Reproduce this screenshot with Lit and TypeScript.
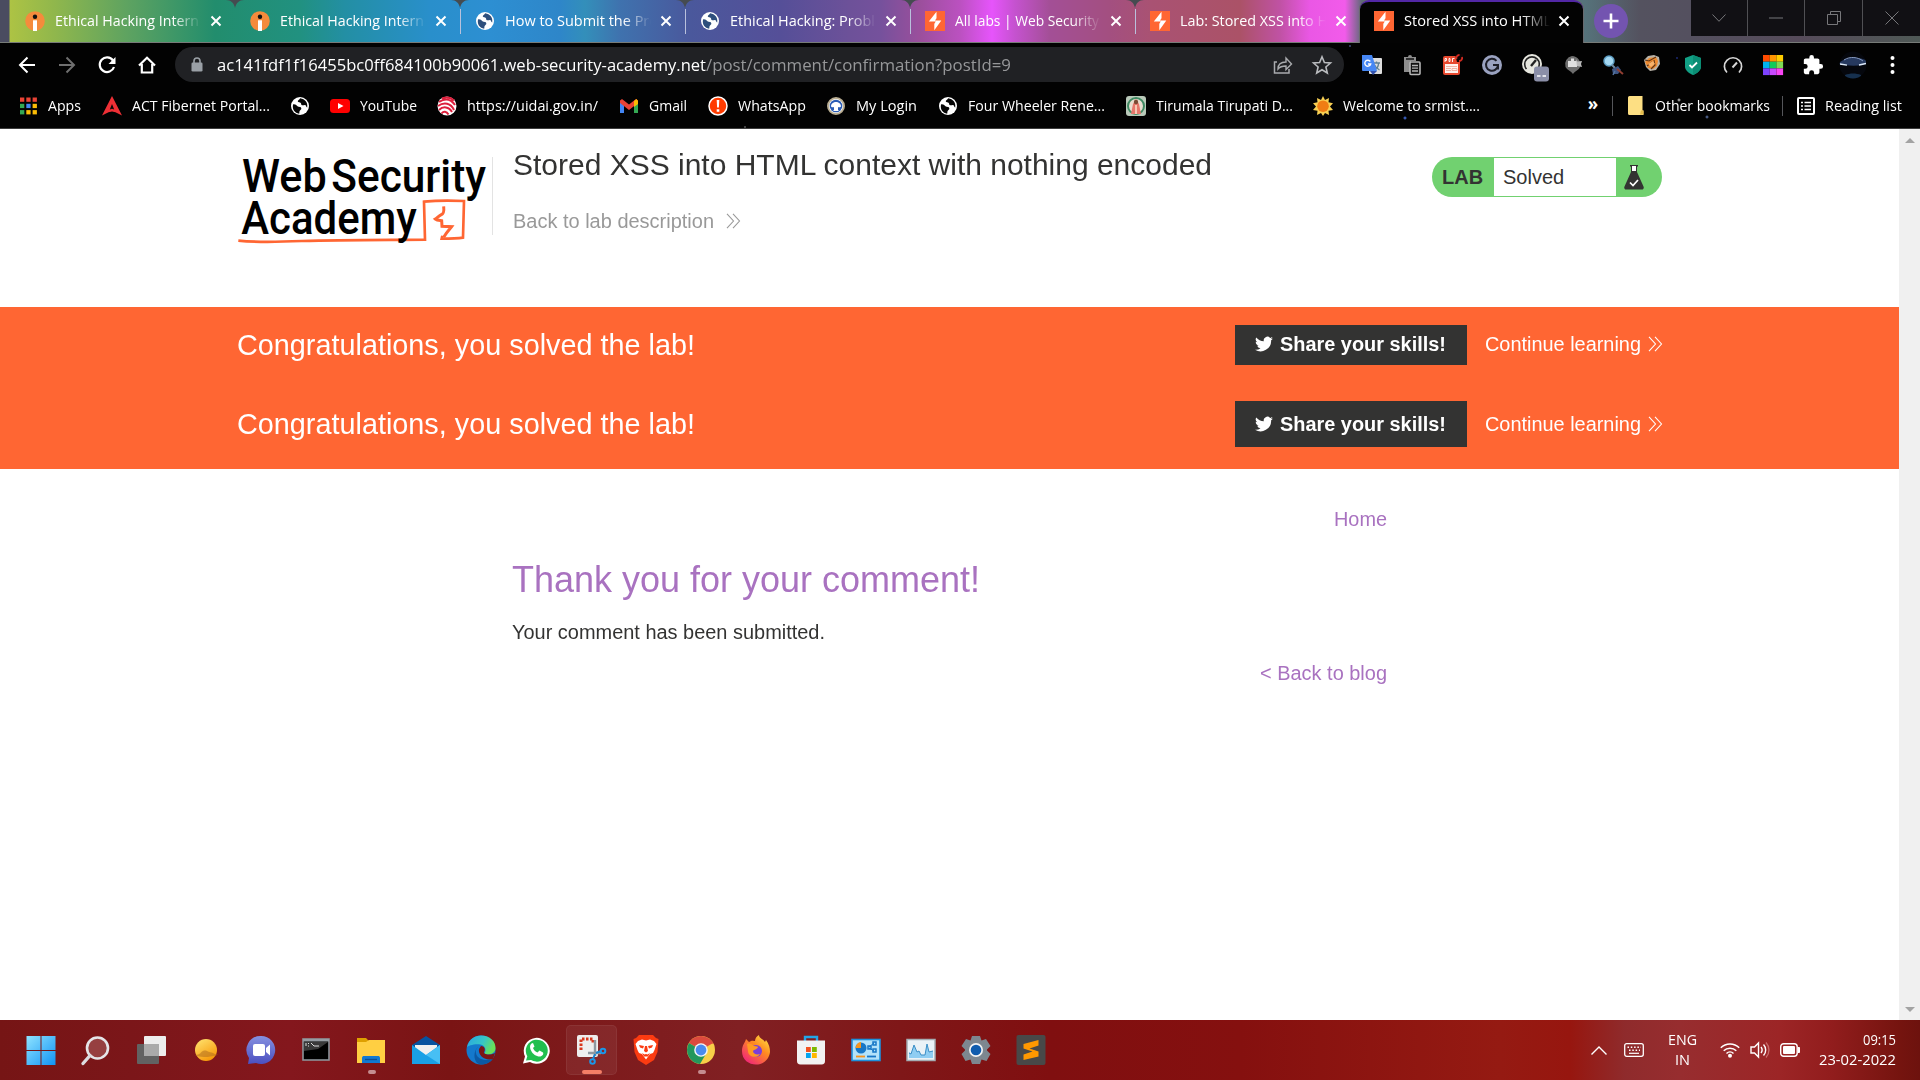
import { LitElement, html, css, svg, TemplateResult } from "lit";
import { customElement, property } from "lit/decorators.js";

/* One line of text, condensed or widened to an exact advance width. */
@customElement("fit-text")
class FitText extends LitElement {
  @property({ type: Number }) w = 0;
  @property() text = "";
  static styles = css`
    :host { display: block; flex: none; white-space: pre; }
    .t { display: inline-block; transform-origin: 0 50%; }
  `;
  render() {
    return html`<span class="t">${this.text}</span>`;
  }
  updated() {
    const el = this.renderRoot.querySelector(".t") as HTMLElement;
    const natural = el.getBoundingClientRect().width;
    if (this.w && natural) {
      this.style.width = this.w + "px";
      el.style.transform = `scaleX(${this.w / natural})`;
    }
  }
}

const box = (w: number, h: number, vb: string, body: unknown) =>
  html`<svg width=${w} height=${h} viewBox=${vb} fill="none">${body}</svg>`;
const ft = (text: string, w: number) => html`<fit-text .text=${text} .w=${w}></fit-text>`;

const close = box(12, 12, "0 0 12 12", svg`<path d="M1.5 1.5l9 9M10.5 1.5l-9 9" stroke="#fff" stroke-width="2"/>`);
const internIcon = box(20, 20, "0 0 20 20", svg`<circle cx="10" cy="10" r="9.8" fill="#f58b3c"/><circle cx="10" cy="5.800" r="2.200" fill="#111"/><path d="M8 9.300h4V20H8z" fill="#fff"/>`);
const globeWith = (ink: string) => box(20, 20, "0 0 20 20", svg`<circle cx="10" cy="10" r="9" fill="#fff"/><path d="M3 8.500c2-.5 3.200.5 4.500 1.800 1 1 3.500.2 3.800 2 .3 1.500-1.300 1.700-1.800 3l-.3 2.400C4.800 17 2 13.500 3 8.500zM10.200 2.200C9.500 4 7.500 4 7.800 5.500c.4 1.300 2.200.3 3 1.500.7 1.200 0 2 1.500 2.300 1.400.2 2.200-.8 3.200-.1.900.7.5 2 1.700 2.200C18 6.500 15 3 10.200 2.200z" fill=${ink}/>`);
const globe = globeWith("#2e4f7c");
const globeDark = globeWith("#050505");
const burp = box(20, 20, "0 0 20 20", svg`<path fill="#ff6633" d="M0 0h20v20H0z"/><path d="M11.500 .800v6.400l-1.500 2.300h6.300L9.300 19.200v-6.400l1.500-2.300H3.800z" fill="#fff"/>`);

const tabs: [string, number, TemplateResult][] = [
  ["Ethical Hacking Intern", 144, internIcon],
  ["Ethical Hacking Intern", 144, internIcon],
  ["How to Submit the Pro", 153, globe],
  ["Ethical Hacking: Proble", 153, globe],
  ["All labs | Web Security", 144, burp],
  ["Lab: Stored XSS into H", 148, burp],
  ["Stored XSS into HTML c", 158, burp],
];

const colors9 = ["#ea4335", "#ea4335", "#ea4335", "#34a853", "#4285f4", "#fbbc05", "#34a853", "#fbbc05", "#fbbc05"];
const marks: [string, number, TemplateResult][] = [
  ["Apps", 33, box(20, 20, "0 0 20 20", svg`${colors9.map((c, i) => svg`<rect x=${2 + (i % 3) * 6.300} y=${1.500 + Math.floor(i / 3) * 6.300} width="4.300" height="4.300" fill=${c}/>`)}`)],
  ["ACT Fibernet Portal...", 138, box(20, 20, "0 0 20 20", svg`<path d="M10 0l10 19.500-6.500-3.200-3.500-.8-3.500.8L0 19.500z" fill="#ee2f35"/><path d="M10 8l2.200 5.500-2.200-.8-2.200.8z" fill="#090909"/>`)],
  ["", 0, globeDark],
  ["YouTube", 57, box(20, 20, "0 0 20 20", svg`<rect y="3" width="20" height="14" rx="3.500" fill="#f00"/><path d="M8 7l5.500 3L8 13z" fill="#fff"/>`)],
  ["https://uidai.gov.in/", 131, box(20, 20, "0 0 20 20", svg`<circle cx="10" cy="10" r="9.500" fill="#fff"/><path d="M2 6c6-4 12-3 16 3M1 10c6-4.500 13-3 16 4M2 14c4-4 10-3.500 13 2M4.500 17.500c2-2.500 5-2.500 7 1M5 2.500c5-2 9-1 12 2" stroke="#dc1f3c" stroke-width="2"/>`)],
  ["Gmail", 38, box(20, 20, "0 0 20 20", svg`<path d="M1 5v12h4V8z" fill="#4285f4"/><path d="M15 8v9h4V5z" fill="#34a853"/><path d="M1 4.500L3 3l7 5.500L17 3l2 1.500V7l-9 7-9-7z" fill="#ea4335"/><path d="M15 5l2.500-2L19 5v3l-4 3z" fill="#fbbc04"/>`)],
  ["WhatsApp", 68, box(20, 20, "0 0 20 20", svg`<circle cx="10" cy="10" r="9" fill="#ff3b00" stroke="#fff" stroke-width="1.500"/><path d="M8.700 4h2.600l-.4 7.500H9.100zM8.700 13.200h2.600v2.600H8.700z" fill="#fff"/>`)],
  ["My Login", 61, box(20, 20, "0 0 20 20", svg`<circle cx="10" cy="10" r="8" fill="#fff" stroke="#b9ad92" stroke-width="2"/><circle cx="10" cy="10" r="6.300" fill="#2a5bb5"/><path d="M5 10.500c0-3 2.500-4.500 5-4.500s5 1.500 5 4.500c-1 1-2.500 1-3 .5V14l1 1H7l1-1v-3c-1 .5-2 .5-3-.5z" fill="#fff"/>`)],
  ["Four Wheeler Rene...", 137, globeDark],
  ["Tirumala Tirupati D...", 137, box(20, 20, "0 0 20 20", svg`<rect width="20" height="20" rx="3" fill="#b9c9b9"/><circle cx="10" cy="10" r="8" stroke="#3f8a63" stroke-width="2" fill="#e9ddd0"/><path d="M10 3l3 5 2 10H5L7 8z" fill="#e6776c"/><circle cx="10" cy="6" r="2.200" fill="#7b4a35"/><path d="M10 9v9" stroke="#f5c8b4" stroke-width="2"/>`)],
  ["Welcome to srmist....", 137, box(20, 20, "0 0 20 20", svg`<path d="M10 0l2 4 4-2-.5 4.200 4.500 1-3 3.300 3 3.500-4.500.7.500 4.300-4-2-2 3-2-3-4 2 .5-4.300L0 14l3-3.500L0 7.200l4.500-1L4 2l4 2z" fill="#f7cf53"/><circle cx="10" cy="10.200" r="5.800" fill="#f07d14"/>`)],
];

const exts: TemplateResult[] = [
  box(22, 22, "0 0 22 22", svg`<rect x="8" y="4" width="13" height="16" rx="1" fill="#dedede"/><path d="M12 9h7M15.500 7.500V9M13 16c3-1 4.500-4 4.500-7M13.500 11c1 2 3 4 5 5" stroke="#5d7f94" stroke-width="1.300"/><path d="M1 1h10l5 16H2a1 1 0 01-1-1z" fill="#4687f4"/><path d="M9 17h7l-4 4z" fill="#3352ad"/><path d="M9.300 7.500A3 3 0 109.700 10H7" stroke="#fff" stroke-width="1.400"/>`),
  box(22, 22, "0 0 22 22", svg`<path d="M3 3h4a2 2 0 014 0h4v4h-5v11H3z" fill="#8d8d8d"/><path d="M5 5h8" stroke="#111" stroke-width="1.500"/><rect x="9" y="8" width="10" height="12.500" rx="1" fill="#111" stroke="#b5b5b5" stroke-width="1.600"/><path d="M11 11.500h6M11 14.200h6M11 17h6" stroke="#b5b5b5" stroke-width="1.300"/>`),
  box(22, 22, "0 0 22 22", svg`<rect x="2" y="2" width="17" height="19" rx="2" fill="#e8492f"/><rect x="4" y="10" width="13" height="9" fill="#fff3ef"/><path d="M5 12.500h11M5 14.500h5M5 16.500h5M11 14.500h5v2h-5z" stroke="#f0a292" stroke-width=".8"/><path d="M4 8V4.500h1.500v2H4M8 4.500v3h1v-3zM11.500 8V4.500h2" stroke="#fff" stroke-width=".9"/><path d="M14 0h8v8h-6z" fill="#0a0505"/><path d="M15.500 5a3 3 0 013-4M21 3a3 3 0 01-3 4" stroke="#d52b21" stroke-width="1.800"/>`),
  box(22, 22, "0 0 22 22", svg`<circle cx="11" cy="11" r="10" fill="#9aa2c0"/><path d="M15.500 6.800A6 6 0 1017 11h-5M17 11v4.500" stroke="#1c1d26" stroke-width="2"/>`),
  html`<svg width="22" height="22" viewBox="0 0 22 22" fill="none"><circle cx="11" cy="10" r="10" fill="#e7e7df"/><path d="M5.500 15a7.300 7.300 0 1111 0" stroke="#222" stroke-width="1.600"/><path d="M10 12l5-6" stroke="#222" stroke-width="2.400"/><rect x="13" y="12.500" width="15" height="15" rx="3" fill="#8b8fa8"/><path d="M16 22h3.500M21.500 22H25" stroke="#fff" stroke-width="1.500"/></svg>`,
  box(22, 22, "0 0 22 22", svg`<path d="M10 2a8.500 8.500 0 018 11c-1 3-5 4-7 7-2-3-6-4-7.500-7A8.500 8.500 0 0110 2z" fill="#6d6d6d"/><path d="M6 7h3V4.500h3V7h3v6H6z" fill="#e0e0e0"/><path d="M14 5l1.500 2.500L20 7l-1 3 1 3-5-1z" fill="#b9b9b9"/>`),
  box(22, 22, "0 0 22 22", svg`<circle cx="7" cy="7" r="5" fill="#a4d8f2" stroke="#5e9ec3" stroke-width="1.500"/><path d="M10 11l3 3" stroke="#6d89a2" stroke-width="2"/><path d="M10 15l6-3 3 4-3 4-5 0z" fill="#3d5482"/><path d="M15 15l6 5" stroke="#913e31" stroke-width="2"/><path d="M13 17l-2 4" stroke="#54739d" stroke-width="1.500"/>`),
  box(22, 22, "0 0 22 22", svg`<path d="M2 6l4-4 6-1 5 2 1 7-4 6-6 1-4-4z" fill="#b9b3a8"/><path d="M3 8l4-4 7-1 2 4-1 5-4 3-5-1z" fill="#ee8a2f"/><path d="M3 6l4 1 7-4M5 12l5-4 3 4M9 15l4-4-1-5" stroke="#5b3417" stroke-width="1.100"/><path d="M6 10l5-3 2 3-4 3z" fill="#f6b26b"/>`),
  box(22, 22, "0 0 22 22", svg`<path d="M11 1l8 3v9c0 3.500-5 7-8 8-3-1-8-4.500-8-8V4z" fill="#12a085"/><path d="M11 1l8 3v9c0 3.500-5 7-8 8z" fill="#0b8d74"/><path d="M7.500 11l2.500 2.500 5-5" stroke="#fff" stroke-width="1.800"/>`),
  box(22, 22, "0 0 22 22", svg`<path d="M5 18.500a8.600 8.600 0 1112 0" stroke="#d6d6d6" stroke-width="1.700"/><path d="M10.500 13.500l4.500-5" stroke="#d6d6d6" stroke-width="2"/>`),
  box(22, 22, "0 0 22 22", svg`${["#ff4b00", "#ff9500", "#ffcc00", "#00b3ef", "#12cc5a", "#7edb54", "#7d42ff", "#c84aff", "#fa45f4"].map((c, i) => svg`<rect x=${1 + (i % 3) * 6.700} y=${1 + Math.floor(i / 3) * 6.700} width="6.700" height="6.700" fill=${c}/>`)}`),
  box(22, 22, "0 0 24 24", svg`<path fill="#fff" d="M20.500 11H19V7c0-1.100-.9-2-2-2h-4V3.500a2.500 2.500 0 00-5 0V5H4c-1.100 0-2 .9-2 2v3.800h1.500a2.700 2.700 0 010 5.400H2V20c0 1.100.9 2 2 2h3.800v-1.500a2.700 2.700 0 015.400 0V22H17c1.100 0 2-.9 2-2v-4h1.500a2.500 2.500 0 000-5z"/>`),
  box(28, 28, "0 0 28 28", svg`<defs><clipPath id="av"><circle cx="14" cy="14" r="13.500"/></clipPath></defs><g clip-path="url(#av)"><path fill="#05070d" d="M0 0h28v28H0z"/><path d="M0 12c6-6 20-7 28-2l-3 4c-8 1-18 1-25-1z" fill="#26395f"/><path d="M5 9c6-4 14-3 19 1" stroke="#8598bf" stroke-width="1"/><path d="M1 13l7 1.200M20 14l7-1.500" stroke="#dce8f7" stroke-width="1.300"/><path d="M6 24c5-2 11-2 16 0v4H6z" fill="#16304e"/></g>`),
  box(22, 22, "0 0 22 22", svg`<circle cx="10.500" cy="4" r="2" fill="#fff"/><circle cx="10.500" cy="11" r="2" fill="#fff"/><circle cx="10.500" cy="18" r="2" fill="#fff"/>`),
];

const chev = (c: string) => box(15, 16, "0 0 15 16", svg`<path d="M1 .8l6.500 7.200L1 15.200M7 .8L13.500 8 7 15.200" stroke=${c} stroke-width="1.100"/>`);
const bird = box(18, 18, "0 0 24 24", svg`<path fill="#fff" d="M23.950 4.600a10 10 0 01-2.800.8 4.900 4.900 0 002.100-2.700c-1 .6-2 1-3.100 1.200a4.900 4.900 0 00-8.400 4.500A14 14 0 011.700 3.200a4.900 4.900 0 001.500 6.500 4.900 4.900 0 01-2.200-.6 4.900 4.900 0 003.900 4.900 5 5 0 01-2.200.1 4.900 4.900 0 004.600 3.400A9.900 9.900 0 010 19.500a14 14 0 0021.500-12.400 10 10 0 002.450-2.500z"/>`);

const dk = (body: unknown) => box(32, 32, "0 0 32 32", body);
const dock: TemplateResult[] = [
  dk(svg`<defs><linearGradient id="wn" x1="0" y1="0" x2="1" y2="1"><stop stop-color="#8fe3ff"/><stop offset="1" stop-color="#1093f5"/></linearGradient></defs><path d="M1.500 2h14v14h-14zM16.500 2h14v14h-14zM1.500 17h14v14h-14zM16.500 17h14v14h-14z" fill="url(#wn)"/>`),
  dk(svg`<circle cx="17.500" cy="14" r="10.500" fill="#963f40" stroke="#e5e5e8" stroke-width="2.600"/><path d="M10 21.500l-7 8" stroke="#dcdce0" stroke-width="3.400" stroke-linecap="round"/>`),
  dk(svg`<rect x="9" y="2" width="22" height="20" rx="1" fill="#ededed"/><rect x="2" y="10" width="22" height="20" rx="1" fill="#626262"/><path d="M9 10h15v12H9z" fill="#aaa"/>`),
  dk(svg`<defs><linearGradient id="wt" x1="0" y1="0" x2=".6" y2="1"><stop stop-color="#ffe573"/><stop offset="1" stop-color="#f79a0a"/></linearGradient></defs><circle cx="16" cy="16" r="11" fill="url(#wt)"/><path d="M5 21c3 0 5-1 6-2.500 2-2 4-2.500 6-1.500 2 1.500 4 1 6 2s3 1.500 5 1.500c-2 1.500-4 1-6 1.800-3 .7-5 1-8 .7-4 0-6-1-9-2z" fill="#b8731f" opacity=".6"/>`),
  dk(svg`<defs><linearGradient id="ch" x1="0" y1="0" x2="0" y2="1"><stop stop-color="#8590e0"/><stop offset="1" stop-color="#4b4fc0"/></linearGradient></defs><path d="M16 2a14 14 0 11-5 27l-8 1 1-6A14 14 0 0116 2z" fill="url(#ch)"/><rect x="8" y="10" width="12" height="12" rx="2" fill="#fff"/><path d="M21 14l4-3.500v11L21 18z" fill="#fff"/>`),
  dk(svg`<rect x="3" y="5" width="26" height="21" fill="#000" stroke="#8d949a" stroke-width="1.600"/><path d="M3 5h26v2.500H3z" fill="#969ca2"/><path d="M4 8h24l-10 7-14 2z" fill="#393939"/><path d="M6 9v3M8.500 9v1M8.500 11.500v1M11 9l3 3h5" stroke="#ddd"/>`),
  dk(svg`<path d="M2 4h9l3 3h16v8H2z" fill="#dea000"/><path d="M2 8h9l3-2h16v23H2z" fill="#ffcf42"/><path d="M7 29v-5c0-1.500 1-2 2-2h14c1 0 2 .5 2 2v5z" fill="#1179d1"/><path d="M10 25.500h12" stroke="#0a4e94" stroke-width="1.300"/>`),
  dk(svg`<path d="M2 11L16 2l14 9v5H2z" fill="#0753a0"/><path d="M5 11h22v12H5z" fill="#f0f0f0"/><path d="M2 11l14 10L30 11v19H2z" fill="#19a0e6"/><path d="M30 11v19L16 21z" fill="#47bff4"/>`),
  dk(svg`<defs><linearGradient id="eg" x1="0" y1="0" x2="1" y2=".4"><stop stop-color="#2aa5e4"/><stop offset=".6" stop-color="#36c6c6"/><stop offset="1" stop-color="#68e05a"/></linearGradient></defs><circle cx="16" cy="16" r="14.500" fill="#1479cc"/><path d="M2 13C4 5 10 1.500 16 1.500c9 0 15 6 14.500 13-.5 6-8 7-11 5 2-3 1-8-4-9C9 9.500 3 12 2 13z" fill="url(#eg)"/><path d="M13 13c-4 3-3 13 9 13 3 0 5-1 6.500-2-3 5-8 6.500-13 6.500C8 29 8 17 13 13z" fill="#0c59a4"/><path d="M16 12c3 0 5 3 3 6-1 2 5 4 11 1l-2 6c-9 2-15-4-14-10z" fill="#7c1515"/>`),
  dk(svg`<path d="M3 29.500l2-7A13 13 0 1110 28z" fill="#fff"/><path d="M6 26.500l1.300-4.300A11 11 0 1111 26z" fill="#21bf4e"/><path d="M11.500 9.500c-4 3 1 13.500 9 13 3-1 3-3 2.500-4l-3.500-2-2 2c-2-.5-4-3-4.500-4.500l1.500-1.500-1.500-3.500z" fill="#fff"/>`),
  dk(svg`<rect x="2" y="1" width="21" height="22" rx="2" fill="#eee"/><path d="M6 16V5h12v4" stroke="#d8371d" stroke-width="3" stroke-dasharray="2.500 1.500"/><path d="M20 6v16M13 19h13" stroke="#8e98a0" stroke-width="2.400"/><path d="M20 20l-2 5M21 19l5-2" stroke="#1687d4" stroke-width="2"/><circle cx="17.500" cy="27.500" r="2.300" stroke="#1c96e8" stroke-width="2"/><circle cx="28" cy="17" r="2.300" stroke="#1c96e8" stroke-width="2"/>`),
  dk(svg`<path d="M9 1h14l3 3 2.500 1-1 13-3.500 8-8 5-8-5-3.500-8-1-13L6 4z" fill="#fb3b11"/><path d="M8 7l4-1.500 4 1 4-1L24 7l2.500 3-2 6-1.500 3-3 1-4 5.500-4-5.500-3-1-1.500-3-2-6z" fill="#fff"/><path d="M9 11l5 1-1 2.500-3-1zM23 11l-5 1 1 2.500 3-1zM15 12h2l1 5-2 1.500-2-1.500zM12 19l2.500 1.500L16 20l1.500.5L20 19l-2 3.500h-4z" fill="#fb3b11"/>`),
  dk(svg`<circle cx="16" cy="16" r="14" fill="#f8cf48"/><path d="M16 16L3.900 9A14 14 0 0116 2c5 0 10 3 12.100 7z" fill="#db4a3e"/><path d="M3.900 9A14 14 0 0015 30l6.500-11-5.500-3z" fill="#23975c"/><path d="M16 9h12.100" stroke="#db4a3e"/><circle cx="16" cy="16" r="6.800" fill="#f5f5f5"/><circle cx="16" cy="16" r="5.400" fill="#4a8bee"/>`),
  dk(svg`<defs><linearGradient id="ff" x1="1" y1="0" x2=".2" y2="1"><stop stop-color="#fff04a"/><stop offset=".45" stop-color="#ff8a20"/><stop offset="1" stop-color="#f0217d"/></linearGradient></defs><path d="M2 17C2 11 5 9 6 5l3 3c3-2 5-1 6-1 0-3 2-5 4-6 0 3 4 4 6 7l1-2c3 4 4 8 4 12-1 8-7 12.500-14 12.500S2 26 2 17z" fill="url(#ff)"/><circle cx="16" cy="17" r="6" fill="#7c3fd8"/><path d="M7 10c3-1 5 0 7 2 3 0 4 1 4 1-1 3-4 2-5 4 0 3 4 4 7 3-3 5-12 3-12-3z" fill="#ff9a22"/>`),
  dk(svg`<path d="M10 8V3h12v5" stroke="#23a5e8" stroke-width="2.400"/><path d="M2 6.500h28V27c0 2-1 3.500-3.500 3.500h-21C3 30.500 2 29 2 27z" fill="#f2f2f2"/><path d="M11 13h4.800v5H11z" fill="#f2511f"/><path d="M17 13h4.800v5H17z" fill="#7eb900"/><path d="M11 19h4.800v5H11z" fill="#05a5ee"/><path d="M17 19h4.800v5H17z" fill="#ffb800"/>`),
  dk(svg`<rect x="2" y="5.500" width="28" height="21" fill="#b2e2fa" stroke="#1d91dc" stroke-width="1.600"/><circle cx="11" cy="14" r="5.500" fill="#1777c6"/><path d="M11 14V8a6 6 0 00-5.500 6z" fill="#f8941c"/><path d="M19 13l5-4M19 14l5 3" stroke="#1777c6"/><path d="M23 8h3v3h-3zM23 15h3v3h-3zM18 12h3v3h-3z" stroke="#1777c6" stroke-width="1.500"/><path d="M6 22.500h9" stroke="#f8941c" stroke-width="1.800"/><path d="M17 22.500h9" stroke="#1777c6" stroke-width="1.800"/>`),
  dk(svg`<rect x="2" y="5.500" width="28" height="21" fill="#eaf2f7" stroke="#a4adb3" stroke-width="1.500"/><path d="M4 24v-6l2 2 3-9 3 7 2-1 2 4h4l2-11 2 8 4-1v7z" fill="#8fcdf2"/><path d="M4 19l2 1 3-9 3 7 2-1 2 4h4l2-11 2 8 4-1" stroke="#3b8ec6"/>`),
  dk(svg`<path d="M12 2h8l1.500 4.500L26 5l4.500 7L27 15.500v1l3.500 3.500-4 7-5-1.500L20 30h-8l-1.500-4.500-5 1.500-4-7L5 16.500v-1L1.500 12 6 5l4.500 1.500z" fill="#7d8790"/><circle cx="16" cy="16" r="7" fill="#f3f3f3"/><circle cx="16" cy="16" r="5.300" fill="#0f5cae"/>`),
  dk(svg`<rect x="1.500" y="1" width="29" height="30" rx="2" fill="#484848"/><path d="M23.500 6v5.500l-9 3 9 3v5L8.500 26v-5.500l9-3-9-3V10z" fill="#ff9800"/>`),
];

@customElement("app-root")
class AppRoot extends LitElement {
  static styles = css`
    * { box-sizing: border-box; }
    :host { display: flex; flex-direction: column; width: 1920px; height: 1080px; overflow: hidden; background: #fff; font-family: "Liberation Sans", Arial, sans-serif; }
    svg { display: block; flex: none; overflow: visible; }
    .chrome { height: 129px; flex: none; color: #fff; font-family: "Open Sans", "Noto Sans", sans-serif; border-bottom: 1px solid #3d3d3d;
      background: radial-gradient(circle at 1405px 118px, #4a78ea 0, #2e4c9a 1px, transparent 2px), radial-gradient(circle at 1707px 117px, #6c87c4 0, transparent 2px), radial-gradient(circle at 1679px 100px, #ddd 0, transparent 2px), radial-gradient(circle at 745px 127px, #777 0, transparent 1.500px), radial-gradient(circle at 1677px 58px, #2638a0 0, transparent 1.500px), radial-gradient(circle at 1350px 46px, #5767a5 0, transparent 1.500px), #020202; }
    .strip { height: 43px; display: flex; padding-left: 10px; border-bottom: 1px solid #777b78;
      background: linear-gradient(90deg, #4a4c60 0, #4a4c60 9px, #adc344 10px, #93b84b 50px, #5ca261 130px, #228d6d 215px, #219180 300px, #238fa4 345px, #298fcb 430px, #2d8fd2 490px, #2e86c9 560px, #338fba 585px, #3f72ae 620px, #4a589c 690px, #554f98 780px, #6d5199 850px, #75519c 880px, #9b4f9c 920px, #bb51c0 960px, #e654fb 992px, #c552cf 1015px, #a34f96 1050px, #a34f80 1110px, #a95273 1150px, #ab5267 1240px, #c052a4 1280px, #ea57e5 1310px, #f25bea 1345px, #5d6a76 1362px, #56737b 1584px, #54525f 1640px, #54505f 1690px, #564b5a 1800px, #4f5956 1920px); }
    .tab { position: relative; width: 225px; height: 42px; flex: none; display: flex; align-items: center; padding-left: 15px; font-size: 14.500px; }
    .tab .name { flex: none; width: 147px; margin-left: 10px; overflow: hidden; -webkit-mask-image: linear-gradient(90deg, #000 118px, transparent 146px); mask-image: linear-gradient(90deg, #000 118px, transparent 146px); line-height: 24px; }
    .tab .x { margin-left: 8px; }
    .notch { position: absolute; left: -9px; top: 0; }
    .sep::before { content: ""; position: absolute; left: 0; top: 9px; width: 1px; height: 25px; background: #b9c1dc; }
    .active { background: #030303; border-top: 2px solid #5227a6; border-radius: 9px 9px 0 0; width: 223px; height: 43px; box-shadow: -1px 0 #69696d, 1px 0 #69696d; padding: 0 0 3px 14px; }
    .active .x { margin-left: 7px; }
    .plus { width: 34px; height: 34px; margin: 4px 0 0 11px; border-radius: 50%; background: #7354b0; display: grid; place-items: center; flex: none; }
    .win { margin-left: auto; display: grid; grid-template-columns: 57px 57px 58px 57px; height: 36px; background: #111014; }
    .win div { display: grid; place-items: center; border-right: 1px solid #505054; }
    .win div:last-child { border: 0; }
    .bar { height: 43px; display: flex; align-items: center; }
    .nav { width: 40px; display: grid; place-items: center; flex: none; }
    .bar .nav:first-child { margin-left: 7px; }
    .omni { width: 1169px; height: 35px; margin-left: 8px; border-radius: 18px; background: #202124; display: flex; align-items: center; padding: 0 12px 0 16px; font-size: 17px; flex: none; }
    .omni .host { margin-left: 14px; }
    .omni .path { color: #969799; }
    .omni .share { margin-left: auto; margin-right: 19px; }
    .exts { display: flex; margin-left: 8px; }
    .ext { width: 40.100px; height: 34px; display: grid; place-items: center; }
    .marks { height: 39px; display: flex; align-items: center; padding: 0 18px; font-size: 14.500px; gap: 20.700px; }
    .mark { display: flex; align-items: center; gap: 10px; flex: none; }
    .mark.bare { margin-right: -1.500px; }
    .more { margin-left: auto; font-weight: 700; font-size: 17px; line-height: 18px; padding-bottom: 3px; margin-right: -7px; }
    .rule { width: 1px; height: 20px; background: #55565a; }
    .other { margin: 0 -8px 0 -7px; }
    .read { margin-left: -7px; }
    .page { height: 891px; flex: none; display: flex; }
    .body { width: 1899px; flex: none; color: #333332; }
    .scroll { width: 21px; background: #f0f0f0; display: flex; flex-direction: column; justify-content: space-between; align-items: center; padding: 9px 0 8px; }
    .head { height: 178px; padding: 11px 237px 0 220px; display: flex; }
    .ruleV { width: 1px; height: 78px; background: #e3e3e3; margin: 17px 20px 0 -18px; }
    .title { font-size: 30px; line-height: 36px; margin-top: 7px; }
    .back { display: flex; align-items: center; gap: 12px; color: #999; font-size: 20px; line-height: 24px; margin-top: 26px; }
    .lab { margin: 17px 0 0 auto; width: 230px; height: 40px; border-radius: 20px; background: #71d170; display: flex; align-items: center; font-size: 20px; padding: 1px 0; }
    .lab b { width: 62px; padding-left: 10px; }
    .lab .state { width: 122px; height: 38px; background: #fff; line-height: 39px; padding-left: 9px; margin-right: 8px; }
    .banner { height: 162px; background: #ff6633; color: #fff; padding: 18px 236px 0 237px; }
    .row { display: flex; align-items: center; font-size: 20px; height: 40px; }
    .row .cont, .row .btn { padding-bottom: 2px; }
    .row + .row { margin-top: 36px; height: 46px; }
    .row + .row .cont, .row + .row .btn { padding-bottom: 0; }
    .row .msg { font-size: 30px; line-height: 34px; }
    .btn { margin-left: auto; width: 232px; height: 100%; background: #333332; display: flex; align-items: center; gap: 7px; padding-left: 20px; font-weight: 700; }
    .cont { margin-left: 18px; display: flex; align-items: center; gap: 7px; }
    .blog { width: 875px; margin-left: 512px; padding-top: 38px; font-size: 20px; line-height: 24px; display: flex; flex-direction: column; }
    .link { color: #a972c0; align-self: flex-end; }
    .blog h1 { margin: 26px 0 0; font-weight: 400; font-size: 37.500px; line-height: 44px; color: #a972c0; }
    .blog .p { margin: 19px 0 17px; }
    .task { height: 60px; flex: none; display: flex; align-items: center; padding-left: 13.500px; color: #fff; font-family: "Open Sans", "Noto Sans", sans-serif; font-size: 14.500px; line-height: 20px;
      background: linear-gradient(90deg, #761515 0, #7b1619 130px, #84171d 290px, #7a1414 450px, #7d1a1b 580px, #812023 740px, #7f1718 900px, #800f10 1050px, #85100f 1240px, #951a12 1500px, #97160f 1570px, #8f2b2c 1625px, #972d2f 1680px, #9c2526 1780px, #921d1d 1830px, #75140f 1900px, #6d120e 1920px); }
    .app { position: relative; width: 55px; height: 60px; display: grid; place-items: center; flex: none; }
    .app.on::before { content: ""; position: absolute; inset: 5px 2px; border-radius: 5px; background: rgba(255, 255, 255, 0.06); border: 1px solid rgba(255, 255, 255, 0.06); }
    .app svg { position: relative; }
    .run::after { content: ""; position: absolute; left: 24px; bottom: 6px; width: 8px; height: 4px; border-radius: 2px; background: #c58d90; }
    .on::after { content: ""; position: absolute; left: 18px; bottom: 6px; width: 20px; height: 4px; border-radius: 2px; background: #f47e66; }
    .tray { margin-left: auto; display: flex; align-items: center; padding-right: 24px; }
    .lang, .clock { display: flex; flex-direction: column; align-items: center; }
    .lang { margin: 0 23px 0 24px; }
    .clock { align-items: flex-end; margin-left: 19px; }
  `;

  render() {
    const row = html`<div class="row">
      <span class="msg">${ft("Congratulations, you solved the lab!", 458)}</span>
      <div class="btn">${bird}${ft("Share your skills!", 166)}</div>
      <div class="cont">${ft("Continue learning", 156)}${chev("#fff")}</div>
    </div>`;
    return html`
      <div class="chrome">
        <div class="strip">
          ${tabs.map(([name, w, icon], i) => html`<div class="tab ${i > 1 && i < 6 ? "sep" : ""} ${i === 6 ? "active" : ""}">
            ${i && i < 6 ? html`<svg class="notch" width="18" height="8" viewBox="0 0 18 8"><path d="M0 0h18c-5 0-8 3-9 8-1-5-4-8-9-8z" fill="#454b50"/></svg>` : ""}
            ${icon}<div class="name">${ft(name, w)}</div><div class="x">${close}</div>
          </div>`)}
          <div class="plus">${box(16, 16, "0 0 16 16", svg`<path d="M8 .5v15M.5 8h15" stroke="#fff" stroke-width="2.600"/>`)}</div>
          <div class="win">
            <div>${box(14, 8, "0 0 14 8", svg`<path d="M.5.5L7 7.300 13.500.5" stroke="#77777a"/>`)}</div>
            <div>${box(14, 2, "0 0 14 2", svg`<path d="M0 1h14" stroke="#77777a"/>`)}</div>
            <div>${box(14, 14, "0 0 14 14", svg`<path d="M.5 3.500h10v10H.5zM3.500 3.500v-3h10v10h-3" stroke="#77777a"/>`)}</div>
            <div>${box(14, 14, "0 0 14 14", svg`<path d="M.5.5l13 13M13.500.5l-13 13" stroke="#77777a"/>`)}</div>
          </div>
        </div>
        <div class="bar">
          <div class="nav">${box(18, 18, "0 0 18 18", svg`<path d="M17 9H2M9.500 1.500L2 9l7.500 7.500" stroke="#fff" stroke-width="2"/>`)}</div>
          <div class="nav">${box(18, 18, "0 0 18 18", svg`<path d="M1 9h15M8.500 1.500L16 9l-7.500 7.500" stroke="#6f6f6f" stroke-width="2"/>`)}</div>
          <div class="nav">${box(18, 18, "0 0 18 18", svg`<path d="M15 4.500A7.300 7.300 0 1016 11" stroke="#fff" stroke-width="2.200"/><path d="M17.500 1v7h-7z" fill="#fff"/>`)}</div>
          <div class="nav">${box(18, 18, "0 0 18 18", svg`<path d="M1 9.500L9 1.800l8 7.700M3.800 8v8.500h10.400V8" stroke="#fff" stroke-width="2.200"/>`)}</div>
          <div class="omni">
            ${box(12, 15, "0 0 12 15", svg`<rect x=".5" y="5.500" width="11" height="9" rx="1.300" fill="#9aa0a6"/><path d="M3 6V4a3 3 0 016 0v2" stroke="#9aa0a6" stroke-width="1.600"/>`)}
            <span class="host">${ft("ac141fdf1f16455bc0ff684100b90061.web-security-academy.net", 489)}</span>
            <span class="path">${ft("/post/comment/confirmation?postId=9", 305)}</span>
            <span class="share">${box(20, 20, "0 0 20 20", svg`<path d="M4 7H1.500v11H16v-4" stroke="#a9abae" stroke-width="1.500"/><path d="M5 14c0-5 3-7 8-7V3l5.500 6L13 14.500V11c-4 0-6 .5-8 3z" stroke="#a9abae" stroke-width="1.400"/>`)}</span>
            ${box(20, 20, "0 0 20 20", svg`<path d="M10 1.800l2.400 5.700 6.100.5-4.600 4 1.400 6-5.300-3.200L4.700 18l1.400-6-4.600-4 6.100-.5z" stroke="#b9bbbe" stroke-width="1.600"/>`)}
          </div>
          <div class="exts">${exts.map((e) => html`<div class="ext">${e}</div>`)}</div>
        </div>
        <div class="marks">
          ${marks.map(([name, w, icon]) => html`<div class="mark ${name ? "" : "bare"}">${icon}${name ? ft(name, w) : ""}</div>`)}
          <span class="more">»</span>
          <span class="rule"></span>
          <div class="mark other">${box(18, 20, "0 0 18 20", svg`<path d="M1 1.500A1.500 1.500 0 012.500 0h13v14.500h1V19H2.500A1.500 1.500 0 011 17.500z" fill="#fddf83"/><path d="M14 14.500h2.500v4H13z" fill="#e5bd4e"/>`)}${ft("Other bookmarks", 115)}</div>
          <span class="rule"></span>
          <div class="mark read">${box(18, 18, "0 0 18 18", svg`<rect x="1" y="1" width="16" height="16" rx="1" stroke="#fff" stroke-width="2"/><path d="M4 5.500h2M4 9h2M4 12.500h2M7.500 5.500H14M7.500 9H14M7.500 12.500H14" stroke="#fff" stroke-width="1.600"/>`)}${ft("Reading list", 77)}</div>
        </div>
      </div>

      <div class="page">
        <div class="body">
          <div class="head">
            <svg width="290" height="110" viewBox="0 0 870 330" font-family="Roboto, sans-serif" font-weight="500" font-size="141" fill="#000">
              <path d="M55 302c60 6 120 4 190 1 130-4 260-3 370-4l-3-114c40-4 80-4 120-2l-3 110c-20 3-42 3-64 3l2-9" fill="none" stroke="#ff6633" stroke-width="8"/>
              <path d="M671 199c2 18-1 22-7 25-8 4-12 9-18 13 6 5 15 4 19 5l1 17 29 1c-5 7-14 15-24 32" fill="none" stroke="#ff6633" stroke-width="9"/>
              <text x="66" y="157" textLength="254" lengthAdjust="spacingAndGlyphs">Web</text>
              <text x="334" y="157" textLength="464" lengthAdjust="spacingAndGlyphs">Security</text>
              <text x="64" y="281" textLength="526" lengthAdjust="spacingAndGlyphs">Academy</text>
            </svg>
            <div class="ruleV"></div>
            <div>
              <div class="title">${ft("Stored XSS into HTML context with nothing encoded", 699)}</div>
              <div class="back">${ft("Back to lab description", 201)}${chev("#999")}</div>
            </div>
            <div class="lab"><b>LAB</b><span class="state">Solved</span>
              ${box(20, 26, "0 0 20 26", svg`<path d="M6 1h8v1.500h-1V8l6.500 14.500a2 2 0 01-2 3h-15a2 2 0 01-2-3L7 8V2.500H6z" fill="#333332"/><path d="M8 2h4v5H8z" fill="#fff"/><path d="M6 18.500l3 3 5-5.500" stroke="#fff" stroke-width="1.700"/>`)}
            </div>
          </div>
          <div class="banner">${row}${row}</div>
          <div class="blog">
            <div class="link">${ft("Home", 53)}</div>
            <h1>${ft("Thank you for your comment!", 468)}</h1>
            <div class="p">${ft("Your comment has been submitted.", 313)}</div>
            <div class="link">${ft("< Back to blog", 127)}</div>
          </div>
        </div>
        <div class="scroll">
          ${box(10, 5, "0 0 10 5", svg`<path d="M0 5L5 0l5 5z" fill="#a3a3a3"/>`)}
          ${box(10, 5, "0 0 10 5", svg`<path d="M0 0h10L5 5z" fill="#a3a3a3"/>`)}
        </div>
      </div>

      <div class="task">
        ${dock.map((d, i) => html`<div class="app ${i === 10 ? "on" : i === 6 || i === 12 ? "run" : ""}">${d}</div>`)}
        <div class="tray">
          ${box(16, 9, "0 0 16 9", svg`<path d="M.5 8.500L8 1l7.500 7.500" stroke="#fff" stroke-width="1.400"/>`)}
          <svg width="37" height="14" viewBox="-17 0 37 14"><rect x=".7" y=".7" width="18.600" height="12.600" rx="2" stroke="#fff" stroke-width="1.300" fill="none"/><path d="M3.500 4.200h13.500M5 7.200h11" stroke="#fff" stroke-width="1.500" stroke-dasharray="1.500 1.800"/><path d="M5 10.300h10" stroke="#fff" stroke-width="1.200"/></svg>
          <div class="lang">${ft("ENG", 29)}${ft("IN", 15)}</div>
          ${box(20, 16, "0 0 20 16", svg`<path d="M.8 5.800a13 13 0 0118.400 0M3.700 8.800a8.900 8.900 0 0112.600 0M6.500 11.500a5 5 0 017 0" stroke="#fff" stroke-width="1.500"/><circle cx="10" cy="13.800" r="2" fill="#fff"/>`)}
          <svg width="40" height="18" viewBox="-10 0 40 18" fill="none"><path d="M1 6h3.500L8.500 2v14L4.500 12H1z" stroke="#fff" stroke-width="1.400"/><path d="M11 6a5 5 0 010 6M13.500 3.500a8 8 0 010 11" stroke="#fff" stroke-width="1.400"/><path d="M16 1.500a11 11 0 010 15" stroke="#c96a6a" stroke-width="1.300"/></svg>
          ${box(20, 14, "0 0 20 14", svg`<rect x=".7" y=".7" width="16.500" height="12.600" rx="3" stroke="#fff" stroke-width="1.400"/><rect x="3" y="3" width="12" height="8" rx="1" fill="#fff"/><path d="M18 4.500h1.500v5H18" fill="#fff" stroke="#fff"/>`)}
          <div class="clock">${ft("09:15", 33)}${ft("23-02-2022", 77)}</div>
        </div>
      </div>
    `;
  }
}
